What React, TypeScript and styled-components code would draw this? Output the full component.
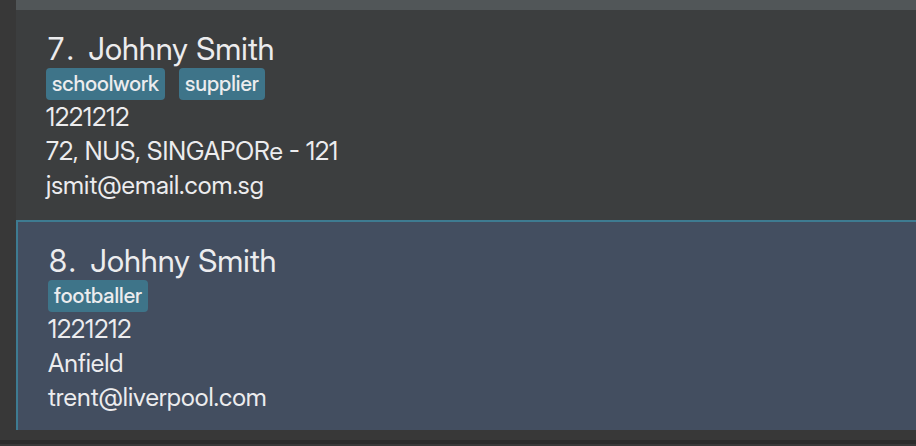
import React from "react";
import styled, { createGlobalStyle } from "styled-components";

const GlobalStyle = createGlobalStyle`
  * { box-sizing: border-box; }
  body { margin: 0; background: #383838; }
`;

const Panel = styled.main`
  min-height: 100vh;
  background: #383838;
  color: #ececee;
  font-family: "Inter Display", Inter, "Liberation Sans", sans-serif;
  font-weight: 400;
`;

const PreviousCard = styled.div`
  height: 10px;
  margin-left: 16px;
  background: #515658;
`;

const List = styled.ul`
  margin: 0 0 0 16px;
  padding: 0;
  list-style: none;
`;

const Card = styled.li<{ $selected?: boolean }>`
  padding: ${(p) => (p.$selected ? "20px 30px 16px" : "20px 30px 18px")};
  background: ${(p) => (p.$selected ? "#434e60" : "#3c3e3f")};
  border: 0 solid #3e7b91;
  border-width: ${(p) => (p.$selected ? "2px 0 0 2px" : "0")};
`;

const Heading = styled.h2`
  display: flex;
  gap: 14px;
  margin: 0;
  font-size: 31px;
  line-height: 38px;
  font-weight: 400;
  font-variant-numeric: tabular-nums;
`;

const Tags = styled.div`
  display: flex;
  flex-wrap: wrap;
  gap: 14px;
`;

const Tag = styled.span`
  padding: 0 6px;
  border-radius: 4px;
  background: #3e7489;
  font-size: 21px;
  line-height: 32px;
  font-weight: 500;
`;

const Detail = styled.p`
  margin: 0;
  font-size: 25px;
  line-height: 34px;
`;

const Divider = styled.div`
  height: 4px;
  margin-top: 10px;
  background: #2b2b2b;
`;

type Person = { id: number; name: string; tags: string[]; details: string[]; selected?: boolean };

const people: Person[] = [
  { id: 7, name: "Johhny Smith", tags: ["schoolwork", "supplier"], details: ["1221212", "72, NUS, SINGAPORe - 121", "jsmit@email.com.sg"] },
  { id: 8, name: "Johhny Smith", tags: ["footballer"], details: ["1221212", "Anfield", "trent@liverpool.com"], selected: true },
];

export default function App() {
  return (
    <Panel>
      <GlobalStyle />
      <PreviousCard />
      <List>
        {people.map((p) => (
          <Card key={p.id} $selected={p.selected}>
            <Heading>
              <span>{p.id}.</span>
              <span>{p.name}</span>
            </Heading>
            <Tags>{p.tags.map((t) => <Tag key={t}>{t}</Tag>)}</Tags>
            {p.details.map((d) => <Detail key={d}>{d}</Detail>)}
          </Card>
        ))}
      </List>
      <Divider />
    </Panel>
  );
}
